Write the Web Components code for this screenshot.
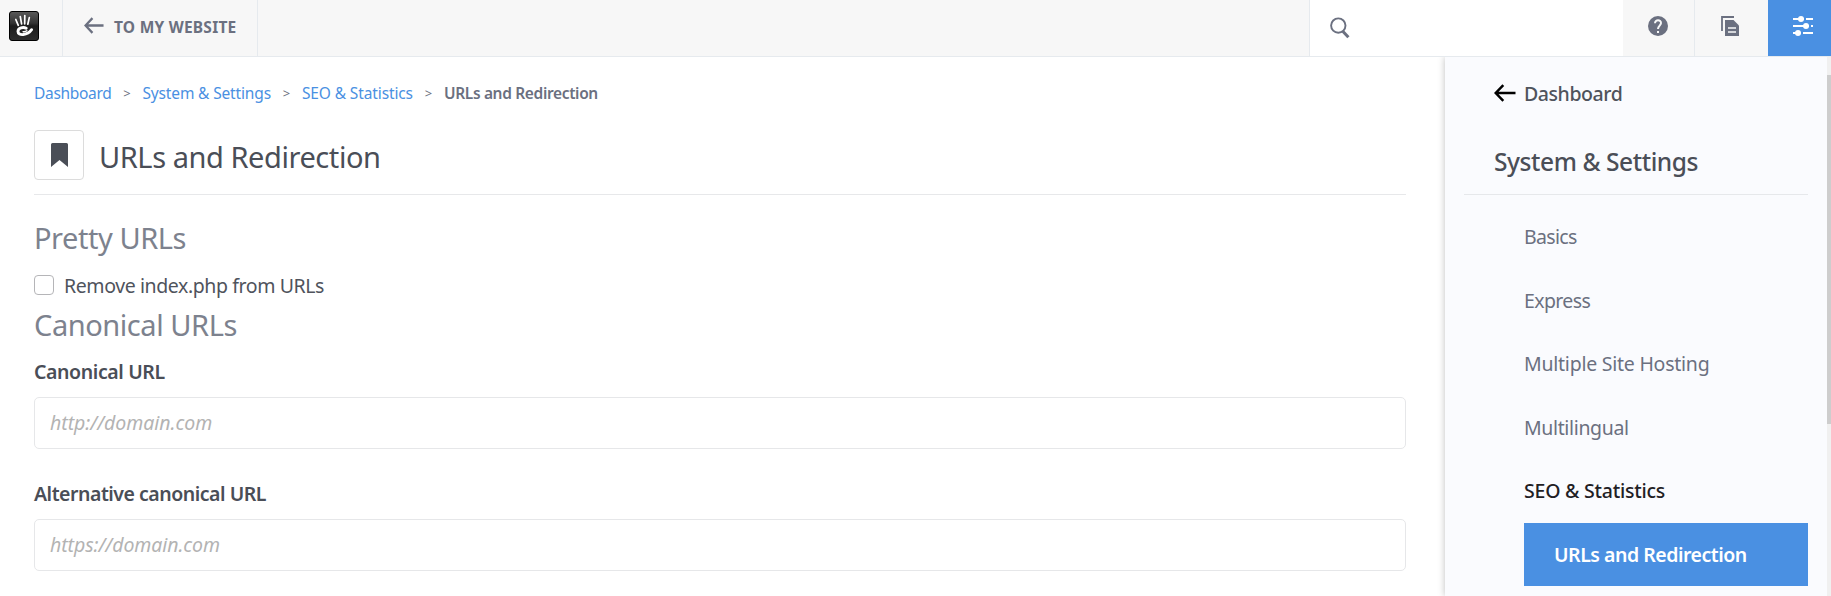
<!DOCTYPE html>
<html lang="en">
<head>
<meta charset="utf-8">
<title>URLs and Redirection</title>
<style>
html,body{margin:0;height:100%;overflow:hidden;background:#fff}
body{font-family:"Noto Sans","Open Sans",sans-serif}
</style>
</head>
<body>
<dash-app></dash-app>
<script>
const define=(name,html)=>customElements.define(name,class extends HTMLElement{
  constructor(){super();this.attachShadow({mode:'open'}).innerHTML=html}
});

// Inline label with its own tracking, given in px by the "ls" attribute.
customElements.define('tracked-text',class extends HTMLElement{
  constructor(){super();this.attachShadow({mode:'open'}).innerHTML='<style>:host{display:inline-block;white-space:nowrap}</style><slot></slot>'}
  connectedCallback(){this.style.letterSpacing=this.getAttribute('ls')+'px'}
});

define('brand-logo',`<style>:host{display:block;width:30px;height:30px}svg{display:block}</style>
<svg width="30" height="30" viewBox="0 0 30 30"><defs><linearGradient id="g" x1="0" y1="0" x2="0" y2="1"><stop offset="0" stop-color="#5a5a5a"/><stop offset=".4" stop-color="#333"/><stop offset=".5" stop-color="#1c1c1c"/><stop offset="1" stop-color="#2c2c2c"/></linearGradient></defs>
<rect x=".5" y=".5" width="29" height="29" rx="2.5" fill="url(#g)" stroke="#000"/>
<g fill="none" stroke="#fff" stroke-linecap="round"><path d="M6.800 8.500l2.500 5.800M11.300 5.600l1.300 7.400M15.800 4.600l-.1 8.200M20.300 6.600l-1.500 6.600" stroke-width="1.700"/><path d="M17.200 17.300C14.500 15.700 9 16.600 9 20.400c0 5 9.500 4 13.600-1.700" stroke-width="2.900"/><path d="M17.800 19.800c-1 .9-2.800 1-3.700.9" stroke-width="1.500"/></g></svg>`);

define('back-arrow',`<style>:host{display:block}svg{display:block}</style>
<svg width="100%" height="100%" viewBox="0 0 22 18" preserveAspectRatio="none"><path d="M21.500 9H2M9.300 1.200L1.700 9l7.600 7.800" fill="none" stroke="currentColor" stroke-width="2.500"/></svg>`);

define('top-bar',`<style>
:host{display:flex;height:56px;background:#f7f7f7;border-bottom:1px solid #e6eaee;color:#6b7080}
div{box-sizing:border-box;height:56px;display:flex;align-items:center}
.logo{width:63px;padding:0 0 4px 9px;border-right:1px solid #e6eaee}
.back{width:195px;padding:0 0 6px 21px;border-right:1px solid #e6eaee}
back-arrow{width:20px;height:17px}
tracked-text{margin:4px 0 0 10px;font:700 15.500px/20px "Noto Sans",sans-serif}
.search{margin-left:auto;width:314px;background:#fff;border-left:1px solid #e6eaee;padding:0 0 1px 19px}
.cell{justify-content:center;padding-bottom:4px}
.help{width:72px;border-right:1px solid #e6eaee;padding-right:2px}.copy{width:73px;padding-right:4px}
.set{width:63px;background:#4a90e2;padding:0 0 4px 6px}
</style>
<div class="logo"><brand-logo></brand-logo></div>
<div class="back"><back-arrow></back-arrow><tracked-text ls=".234">TO MY WEBSITE</tracked-text></div>
<div class="search"><svg width="22" height="22" viewBox="0 0 22 22" fill="none" stroke="#6b7080"><circle cx="9.300" cy="8.600" r="7.200" stroke-width="1.900"/><path d="M13.800 14.200l5.600 6" stroke-width="3"/></svg></div>
<div class="cell help"><svg width="20" height="20" viewBox="0 0 20 20"><circle cx="10" cy="10" r="10" fill="#6b7080"/><path d="M7 7.200C7.100 3 13.100 3.400 13 7.100c0 2.400-3 2.800-3 5.900" fill="none" stroke="#f7f7f7" stroke-width="2"/><rect x="9" y="15" width="2" height="2" fill="#f7f7f7"/></svg></div>
<div class="cell copy"><svg width="18" height="20" viewBox="0 0 18 20"><path d="M1 15V1h12" fill="none" stroke="#6b7080" stroke-width="1.800"/><path fill="#6b7080" d="M4 4h8.500L18 9.500V20H4z"/><path d="M7 12h8M7 16h8" stroke="#f7f7f7" stroke-width="1.600"/></svg></div>
<div class="cell set"><svg width="20" height="20" viewBox="0 0 20 20"><g stroke="#fff" stroke-width="2"><path d="M0 3h11M13 3h7M0 10h16M18 10h2M0 17h7.500M10 17h10"/></g><g fill="#fff"><circle cx="8" cy="3" r="3"/><circle cx="13" cy="10" r="3"/><circle cx="5" cy="17" r="3"/></g></svg></div>`);

define('crumb-trail',`<style>:host{display:flex;font:400 15.500px/24px "Noto Sans",sans-serif;color:#4a90e2;height:24px}
i{font-style:normal;font-size:13px;color:#6b7080;width:31px;text-align:center}b{font-weight:600;color:#6b7080}</style>
<tracked-text ls="-.31">Dashboard</tracked-text><i>&gt;</i><tracked-text ls="-.153">System &amp; Settings</tracked-text><i>&gt;</i><tracked-text ls="-.12">SEO &amp; Statistics</tracked-text><i>&gt;</i><b><tracked-text ls="-.345">URLs and Redirection</tracked-text></b>`);

define('page-title',`<style>:host{display:flex;align-items:center;height:50px;margin-top:25px;padding-bottom:14px;border-bottom:1px solid #e7e8ea;font-size:29px;line-height:40px;color:#4a4e57}
.box{box-sizing:border-box;width:50px;height:50px;border:1px solid #dcdcdc;border-radius:4px;display:flex;align-items:center;justify-content:center;margin-right:15px}::slotted(*){margin-top:3px}</style>
<div class="box"><svg width="17" height="24" viewBox="0 0 17 24"><path fill="#4a4e57" d="M0 24V1.500Q0 0 1.500 0h14Q17 0 17 1.500V24l-8.500-7z"/></svg></div><slot></slot>`);

define('section-heading',`<style>:host{display:block;height:40px;font-size:29px;line-height:41px;color:#7d828e}</style><slot></slot>`);
define('check-row',`<style>:host{display:flex;align-items:center;height:30px;margin:13px 0 4px;font-size:19.500px;line-height:30px;color:#4f535c}
span{box-sizing:border-box;width:20px;height:20px;border:1px solid #b5b5b8;border-radius:4px;margin-right:10px}::slotted(*){margin-top:1px}</style><span></span><slot></slot>`);
define('text-field',`<style>:host{display:block;height:92px;margin-bottom:30px;font-size:19.500px}
.l{height:30px;line-height:30px;font-weight:600;color:#4a4e57}
.in{box-sizing:border-box;height:52px;margin-top:10px;border:1px solid #e6e7e9;border-radius:5px;padding:0 15px;line-height:50px;font-style:italic;color:#b3b3b3}</style>
<div class="l"><slot name="label"></slot></div><div class="in"><slot></slot></div>`);

define('side-item',`<style>:host{display:block;height:63.500px;margin-left:60px;line-height:63.500px;font-size:19.500px;color:#6b7080}
:host([open]){color:#1f2024;font-weight:500}
:host([active]){height:63px;line-height:63px;padding-left:30px;background:#4a90e2;color:#fff;font-weight:600}</style><slot></slot>`);
define('side-panel',`<style>:host{display:flex;box-sizing:border-box;width:386px;height:100%;background:#fafbfe;box-shadow:0 0 7px rgba(0,0,0,.26)}
nav{flex:1;padding:21px 19px 0 19px}
.d{display:flex;align-items:center;height:30px;line-height:30px;padding-left:30px;font-size:19.500px;color:#4f535c;font-weight:500}
.d back-arrow{color:#000;width:22px;height:18px;margin-right:8px}.d tracked-text{margin-top:1px}
.s{margin-top:33px;padding:0 0 13px 30px;line-height:41px;height:40px;font-size:24.500px;font-weight:500;color:#4a4e57;border-bottom:1px solid #e6e8eb;margin-bottom:10px}
.bar{width:4px;background:#f0f0f0;padding-top:18px}.bar div{height:349px;background:#cdcdcd}</style>
<nav><div class="d"><back-arrow></back-arrow><tracked-text ls="-.43">Dashboard</tracked-text></div><div class="s"><tracked-text ls="-.418">System &amp; Settings</tracked-text></div>
<side-item><tracked-text ls="-.68">Basics</tracked-text></side-item><side-item><tracked-text ls="-.62">Express</tracked-text></side-item><side-item><tracked-text ls="-.24">Multiple Site Hosting</tracked-text></side-item><side-item><tracked-text ls="-.36">Multilingual</tracked-text></side-item><side-item open><tracked-text ls="-.23">SEO &amp; Statistics</tracked-text></side-item><side-item active><tracked-text ls="-.485">URLs and Redirection</tracked-text></side-item></nav><div class="bar"><div></div></div>`);

define('dash-app',`<style>:host{display:flex;flex-direction:column;height:596px;overflow:hidden}
.body{display:flex;flex:1;min-height:0;overflow:hidden}
main{flex:1;padding:24px 39px 0 34px}
page-title{margin-bottom:22px}.f{margin-top:13px}</style>
<top-bar></top-bar><div class="body"><main><crumb-trail></crumb-trail>
<page-title><tracked-text ls="-.435">URLs and Redirection</tracked-text></page-title>
<section-heading><tracked-text ls="-.445">Pretty URLs</tracked-text></section-heading>
<check-row><tracked-text ls="-.404">Remove index.php from URLs</tracked-text></check-row>
<section-heading><tracked-text ls="-.44">Canonical URLs</tracked-text></section-heading>
<text-field class="f"><tracked-text slot="label" ls="-.39">Canonical URL</tracked-text><tracked-text ls="-.05">http://domain.com</tracked-text></text-field>
<text-field><tracked-text slot="label" ls="-.481">Alternative canonical URL</tracked-text><tracked-text ls="-.08">https://domain.com</tracked-text></text-field>
</main><side-panel></side-panel></div>`);
</script>
</body>
</html>
